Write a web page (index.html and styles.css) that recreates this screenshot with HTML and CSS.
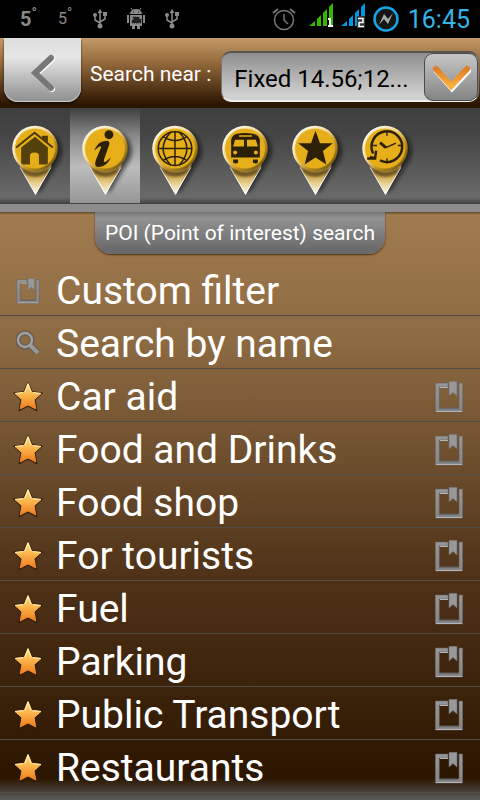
FILE: index.html
```html
<!DOCTYPE html>
<html lang="en">
<head>
<meta charset="utf-8">
<meta name="viewport" content="width=device-width, initial-scale=1">
<title>POI search</title>
<link rel="stylesheet" href="styles.css">
</head>
<body>
<svg class="defs" aria-hidden="true">
  <defs>
    <linearGradient id="tipFill" x1="0" y1="0" x2="0" y2="1"><stop offset="0.35" stop-color="#c9a24a"/><stop offset="0.6" stop-color="#e6cd8c"/><stop offset="1" stop-color="#fffdf4"/></linearGradient>
    <linearGradient id="rim" x1="0.1" y1="0.1" x2="0.85" y2="0.9"><stop offset="0" stop-color="#fff"/><stop offset="0.4" stop-color="#f6e2ae"/><stop offset="0.7" stop-color="#b98d20"/><stop offset="1" stop-color="#6f5616"/></linearGradient>
    <linearGradient id="starFill" x1="0" y1="0" x2="0" y2="1"><stop offset="0" stop-color="#ffdc7c"/><stop offset="0.45" stop-color="#fcb54c"/><stop offset="1" stop-color="#ee7c1c"/></linearGradient>
    <linearGradient id="steel" x1="0" y1="0" x2="0" y2="1"><stop offset="0" stop-color="#969799"/><stop offset="1" stop-color="#85878a"/></linearGradient>
    <linearGradient id="orange" x1="0" y1="0" x2="0" y2="1"><stop offset="0" stop-color="#e07e26"/><stop offset="1" stop-color="#fbb03c"/></linearGradient>
    <filter id="soft" x="-30%" y="-30%" width="160%" height="160%"><feGaussianBlur stdDeviation="2"/></filter>
    <filter id="edge" x="-20%" y="-20%" width="140%" height="140%"><feGaussianBlur stdDeviation="0.9"/></filter>
    <symbol id="pin" viewBox="0 0 70 96">
      <path d="M20 46a21 21 0 1 1 40 6L39 86Z" fill="#111" opacity="0.7" filter="url(#soft)"/>
      <path d="M19 57 35.500 88 52 57Z" fill="url(#tipFill)"/>
      <path d="M20 60 35.500 87 51 60" fill="none" stroke="#fff" stroke-width="1"/>
      <path d="M20 58q15 13 31 0l-4 8q-12 7-23 0z" fill="#3b2c08" opacity="0.65" filter="url(#edge)"/>
      <circle cx="35" cy="41" r="23" fill="url(#rim)"/>
      <circle cx="35" cy="41" r="20" fill="#e6ae18" filter="url(#edge)"/>
      <circle cx="35" cy="41" r="20" fill="#e6ae18"/>
    </symbol>
    <symbol id="star" viewBox="0 0 32 32">
      <path d="M16 1.500 20.400 10.600 30.500 12 23.200 19 25 30 16 25.300 7 30 8.800 19 1.500 12 11.600 10.600Z" fill="#2e1c0c" stroke="#2e1c0c" stroke-width="1" stroke-linejoin="round" opacity="0.85"/>
      <path d="M16 2.500 19.700 11.300 29 12.500 22 18.700 23.800 28 16 23.900 8.200 28 10 18.700 3 12.500 12.300 11.300Z" fill="url(#starFill)" stroke="url(#starFill)" stroke-linejoin="round"/>
      <path d="M13 11.400 16 3 19 11.400M3 12.500 11 11.700M21 11.700 29 12.500" fill="none" stroke="#fff0b8"/>
    </symbol>
    <symbol id="mark" viewBox="0 0 28 32">
      <path d="M0.300 2H13V6H4.300V27H24V2H27.700V31H0.300Z" fill="url(#steel)" stroke="#66605a" stroke-width="0.600"/>
      <path d="M5 6.500H13M1 30.500H27" stroke="#b4b5b7"/>
      <path d="M4 27.500H24" stroke="#68696b" stroke-width="1.500"/>
      <path d="M14 0.300H22V15L18 11.500 14 15Z" fill="#96989b" stroke="#6e6a66" stroke-width="0.600"/>
    </symbol>
    <symbol id="usb" viewBox="0 0 14 20">
      <path d="M7 3V16M7 14 2 11V6M7 13 12 10V5" fill="none" stroke="#8a8a8a" stroke-width="1.500"/>
      <path d="M7 0 9.500 4H4.500ZM10 3h4v4h-4z" fill="#8a8a8a"/><circle cx="2" cy="6" r="2" fill="#8a8a8a"/><circle cx="7" cy="17" r="2.500" fill="#8a8a8a"/>
    </symbol>
  </defs>
</svg>

<div class="status">
  <span class="temp">5<sup>°</sup></span>
  <span class="temp thin">5<sup>°</sup></span>
  <svg class="usb"><use href="#usb"/></svg>
  <svg class="droid" viewBox="0 0 20 22"><g fill="#8a8a8a"><path d="M4 6a6 5 0 0 1 12 0ZM4 7H16V18H14v3H11V18H9v3H6V18H4ZM1 7H3v8H1zM17 7h2v8h-2z"/><path d="m5 0 2 3M15 0l-2 3" stroke="#8a8a8a"/></g><path d="M7 9h6v2h2v4H6v-3h2zM7 4h1M12 4h1" fill="#222" stroke="#222" stroke-dasharray="1 1"/></svg>
  <svg class="usb last"><use href="#usb"/></svg>
  <svg class="alarm" viewBox="0 0 24 24" fill="none" stroke="#777"><circle cx="12" cy="13" r="9.500" stroke-width="1.500"/><path d="M12 7v6l4 4" stroke-width="1.500"/><path d="m1 6 5-4M23 6l-5-4" stroke-width="2"/></svg>
  <svg class="signal" viewBox="0 0 25 25"><path d="M0 23 6 18V23ZM8 16l4-4V23H8ZM14 10l4-4V23H14ZM20 4l4-4V23H20Z" fill="#36b800"/><path d="M19 15h3v7h2v2h-5v-2h1v-5h-1z" fill="#fff"/></svg>
  <svg class="signal" viewBox="0 0 25 25"><path d="M0 23 6 18V23ZM8 16l4-4V23H8ZM14 10l4-4V23H14ZM20 4l4-4V23H20Z" fill="#0097e0"/><path d="M16 13h8v12h-8z" fill="#333"/><path d="M17 15.500h5v4h-4v4h5" fill="none" stroke="#fff" stroke-width="1.500"/></svg>
  <svg class="power" viewBox="0 0 26 26"><circle cx="13" cy="13" r="11.500" fill="#151515" stroke="#16a5e4" stroke-width="2.500"/><path d="M6 19 11 8l4 5 5-6-5 11-4-5Z" fill="#aaa"/></svg>
  <time class="clock">16:45</time>
</div>

<header class="header">
  <button class="back" type="button" aria-label="Back">
    <svg viewBox="0 0 24 40"><path d="M20 5 4 20 20 35" fill="none" stroke="#fff" stroke-width="6" stroke-linecap="round" transform="translate(1 1)"/><path d="M20 5 4 20 20 35" fill="none" stroke="#777" stroke-width="6" stroke-linecap="round"/></svg>
  </button>
  <label class="near" for="near">Search near :</label>
  <div class="picker">
    <select id="near"><option>Fixed 14.56;12...</option></select>
    <svg class="arrow" viewBox="0 0 52 46" aria-hidden="true"><path d="M11 15 26 32 42 15" fill="none" stroke="#fff" stroke-width="6" stroke-linecap="round" transform="translate(1 2)"/><path d="M11 15 26 32 42 15" fill="none" stroke="url(#orange)" stroke-width="6" stroke-linecap="round"/></svg>
  </div>
</header>

<nav class="tabs">
  <button type="button" aria-label="Address"><svg viewBox="0 0 70 96"><use href="#pin"/><path d="M21 40 35 29 48 40V55q0 2-2 2H39V48q0-3-4.500-3T30 48V57H23q-2 0-2-2Z" fill="#54400a"/><path d="M16 40 34.500 25 53 40" fill="none" stroke="#4c3908" stroke-width="2"/><path d="M42 29V28h6V35l-6-5Z" fill="#4c3908"/></svg></button>
  <button type="button" class="active" aria-label="POI"><svg viewBox="0 0 70 96"><use href="#pin"/><circle cx="39" cy="27" r="4.500" fill="#2c2106"/><path d="M24 43Q28 34 34 33.500Q41 32 39 38L34 52Q33 56 36 54L41 50Q37 59 29 59.500Q23 60 26 52L31 40Q32 36 24 43Z" fill="#2c2106"/></svg></button>
  <button type="button" aria-label="Map coordinates"><svg viewBox="0 0 70 96"><use href="#pin"/><g fill="none" stroke="#2c2106" stroke-width="1.500"><circle cx="35" cy="41" r="17"/><path d="M18 41H52M35 24V58M31 24Q15 41 31 58M39 24Q55 41 39 58M23 29Q35 37 47 29M23 53Q35 45 47 53"/></g></svg></button>
  <button type="button" aria-label="Transport"><svg viewBox="0 0 70 96"><use href="#pin"/><path d="M21 32q1-5 6-6 8-1.500 16 0 6 1 7 6V50H21ZM23 52h5v3q-2 2-5 0zM43 52h5v3q-2 2-5 0z" fill="#2c2106"/><path d="M29 27.500H42V29H29ZM25 32h9v7H23ZM37 32h9l2 7H37Z" fill="#e6ae18"/><circle cx="25" cy="45" r="2" fill="#e6ae18"/><circle cx="46" cy="45" r="2" fill="#e6ae18"/></svg></button>
  <button type="button" aria-label="Favorites"><svg viewBox="0 0 70 96"><use href="#pin"/><path d="M35.500 23 40 35.500H53L43 43.500 46.500 57 35.500 50 24.500 57 28 43.500 18 35.500H31Z" fill="#2c2106"/></svg></button>
  <button type="button" aria-label="History"><svg viewBox="0 0 70 96"><use href="#pin"/><g fill="none" stroke="#2c2106"><path d="M23 46A15.500 15.500 0 1 1 30 53" stroke-width="2.500"/><path d="M30 35 36 40" stroke-width="3"/><path d="M36 40 46 35.500" stroke-width="1.500"/><path d="M37 24v4M37 51v4M48 38h4M23 38h4" stroke-width="1.500"/><path d="M17 51H25L26 43M20 49.500 25 51" stroke-width="2.500"/></g></svg></button>
</nav>

<main class="content">
  <h1 class="title">POI (Point of interest) search</h1>
  <ul class="list">
    <li><svg class="small"><use href="#mark"/></svg><a href="#">Custom filter</a></li>
    <li><svg class="small" viewBox="0 0 24 26" fill="none"><circle cx="9" cy="9" r="7" stroke="#635d57" stroke-width="5"/><path d="m15 15 7 7" stroke="#635d57" stroke-width="6"/><circle cx="9" cy="9" r="7" stroke="#a1a1a1" stroke-width="2.500"/><path d="m14 14 8 8" stroke="#999" stroke-width="4"/></svg><a href="#">Search by name</a></li>
    <li><svg class="star"><use href="#star"/></svg><a href="#">Car aid</a><button type="button" aria-label="Edit Car aid"><svg><use href="#mark"/></svg></button></li>
    <li><svg class="star"><use href="#star"/></svg><a href="#">Food and Drinks</a><button type="button" aria-label="Edit Food and Drinks"><svg><use href="#mark"/></svg></button></li>
    <li><svg class="star"><use href="#star"/></svg><a href="#">Food shop</a><button type="button" aria-label="Edit Food shop"><svg><use href="#mark"/></svg></button></li>
    <li><svg class="star"><use href="#star"/></svg><a href="#">For tourists</a><button type="button" aria-label="Edit For tourists"><svg><use href="#mark"/></svg></button></li>
    <li><svg class="star"><use href="#star"/></svg><a href="#">Fuel</a><button type="button" aria-label="Edit Fuel"><svg><use href="#mark"/></svg></button></li>
    <li><svg class="star"><use href="#star"/></svg><a href="#">Parking</a><button type="button" aria-label="Edit Parking"><svg><use href="#mark"/></svg></button></li>
    <li><svg class="star"><use href="#star"/></svg><a href="#">Public Transport</a><button type="button" aria-label="Edit Public Transport"><svg><use href="#mark"/></svg></button></li>
    <li><svg class="star"><use href="#star"/></svg><a href="#">Restaurants</a><button type="button" aria-label="Edit Restaurants"><svg><use href="#mark"/></svg></button></li>
  </ul>
</main>
</body>
</html>
```
FILE: styles.css
```css
* { box-sizing: border-box; }

body {
  margin: 0;
  min-height: 100vh;
  display: flex;
  flex-direction: column;
  background: #000;
  color: #fff;
  font-family: Roboto, "Liberation Sans", sans-serif;
}

svg { display: block; flex: none; }
button { border: 0; padding: 0; background: none; }
.defs { position: absolute; width: 0; height: 0; }

.status {
  height: 38px;
  padding: 0 10px 0 20px;
  display: flex;
  align-items: center;
  background: #000;
}
.temp { width: 38px; color: #8a8a8a; font-size: 20px; font-weight: 700; line-height: 24px; }
.temp sup { font-size: 14px; line-height: 1px; }
.temp.thin { width: 35px; font-size: 16px; font-weight: 400; }
.usb { width: 14px; height: 20px; }
.droid { width: 20px; height: 22px; margin: 0 19px; }
.usb.last { margin-right: auto; }
.alarm { width: 24px; height: 24px; margin-right: 13px; }
.signal { width: 25px; height: 25px; margin: 0 7px 7px 0; }
.power { width: 26px; height: 26px; margin-right: 9px; }
.clock { color: #33b5e5; font-size: 25px; line-height: 30px; padding-top: 2px; }

.header {
  height: 70px;
  display: flex;
  align-items: flex-start;
  background: linear-gradient(#c49a68, #94693c 35%, #2c1500 95%, #2c1500);
}
.back {
  width: 77px;
  height: 64px;
  margin-left: 4px;
  display: flex;
  align-items: center;
  justify-content: center;
  border-radius: 0 0 14px 14px;
  background: linear-gradient(#dedede, #e6e6e6 30%, #8e8e8e);
  box-shadow: 0 2px 2px #1a0e04, inset 0 -1px 1px #d0d0d0;
}
.back svg { width: 24px; height: 40px; margin-top: 6px; }
.near { margin: 24px 8px 0 9px; font-size: 21px; line-height: 24px; white-space: nowrap; }
.picker {
  flex: 1;
  min-width: 0;
  height: 51px;
  margin: 13px 1px 0 2px;
  display: flex;
  align-items: center;
  border: 1px solid #777;
  border-top: 2px solid #555;
  border-bottom: 2px solid #eee;
  border-radius: 10px;
  background: linear-gradient(#8e8e8e, #d0d0d0 90%);
}
.picker select {
  flex: 1;
  min-width: 0;
  height: 46px;
  padding: 4px 0 0 12px;
  appearance: none;
  border: 0;
  background: none;
  color: #000;
  font: 24px/32px Roboto, "Liberation Sans", sans-serif;
}
.arrow {
  width: 54px;
  height: 48px;
  border: 1px solid #4c4c4c;
  border-radius: 9px;
  background: linear-gradient(#c6c6c6, #858585);
}

.tabs {
  height: 104px;
  display: flex;
  border-bottom: 8px solid #8c8c8c;
  background: linear-gradient(#3e3e3e, #464646 30%, #6a6a6a 93%, #444 99%);
}
.tabs button { width: 70px; height: 95px; }
.tabs svg { width: 70px; height: 95px; }
.tabs .active { background: linear-gradient(#404040, #8a8a8a 30%, #bdbdbd 62%, #969696); }

.content {
  flex: 1;
  background:
    linear-gradient(#0006, transparent 3px),
    linear-gradient(transparent calc(100% - 22px), #5a5a5a),
    linear-gradient(#a27b4f, #8c6a42 22%, #4f3218 62%, #2c1600 96%);
}
.title {
  width: fit-content;
  margin: 0 auto 9px;
  padding: 6px 10px;
  border-radius: 0 0 16px 16px;
  background: linear-gradient(#777, #929292 15%, #6a6a6a 90%);
  box-shadow: 0 1px 2px #493116;
  font-size: 21px;
  font-weight: 400;
  line-height: 30px;
}

.list { margin: 0; padding: 0 0 7px; list-style: none; }
.list li {
  height: 53px;
  padding: 0 17px 0 12px;
  display: flex;
  align-items: center;
  border-bottom: 1px solid #504d48;
}
.list a {
  flex: 1;
  padding-top: 3px;
  color: #fff;
  font-size: 39px;
  line-height: 50px;
  text-decoration: none;
}
.list .star { width: 32px; height: 32px; margin: 4px 12px 0 0; }
.list .small { width: 24px; height: 26px; margin: 4px 16px 0 4px; }
.list button svg { width: 28px; height: 32px; margin-top: 3px; }
```
